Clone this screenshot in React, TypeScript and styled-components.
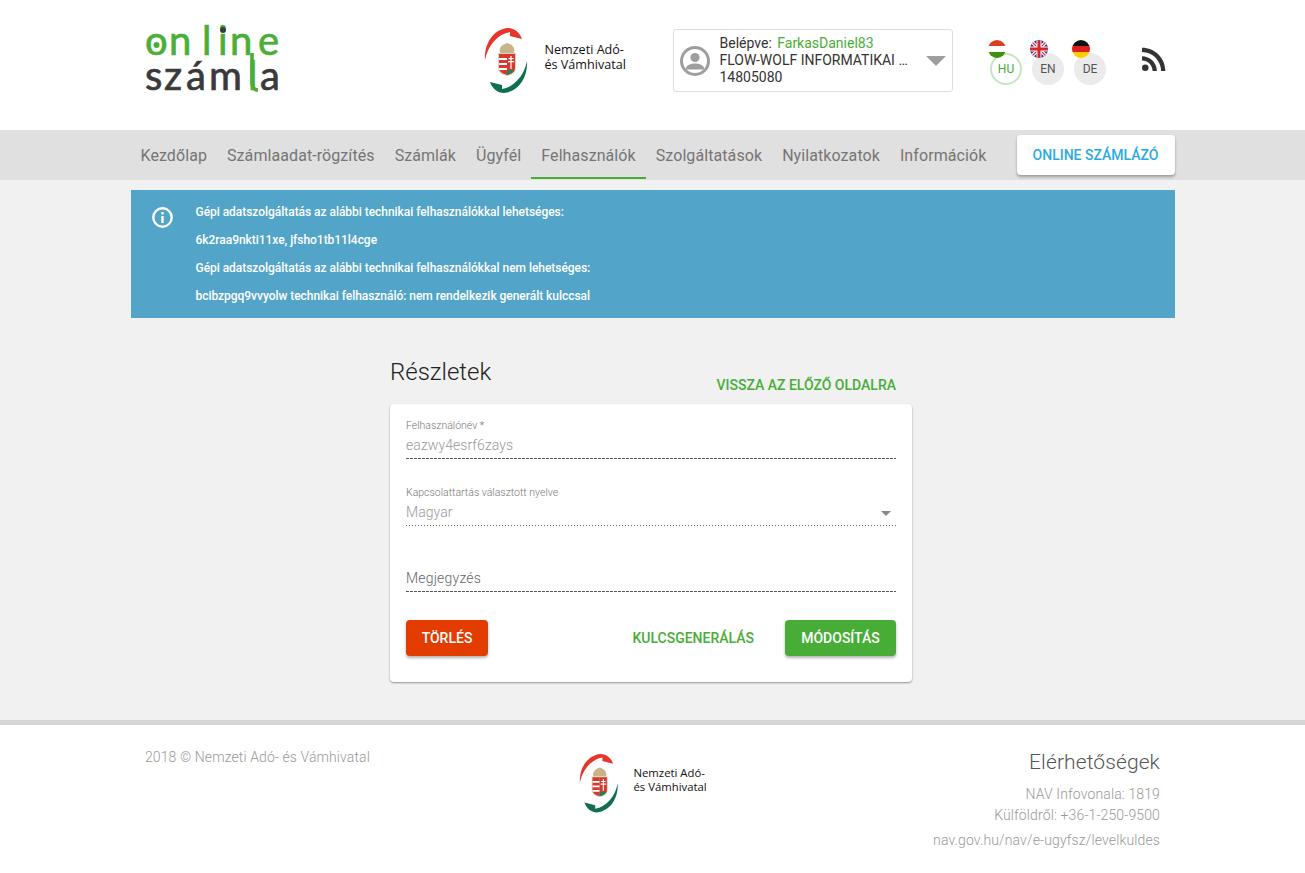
import React from 'react'
import styled, { createGlobalStyle } from 'styled-components'
import { MdRssFeed } from 'react-icons/md'

const GREEN = '#47ad37'

const GlobalStyle = createGlobalStyle`
  html, body {
    margin: 0;
    padding: 0;
    background: #fff;
    font-family: Roboto, "Liberation Sans", sans-serif;
    color: #333;
  }
  * { box-sizing: border-box; }
`

const Page = styled.div`
  min-height: 100vh;
  display: flex;
  flex-direction: column;
`

const Container = styled.div`
  width: 1044px;
  margin: 0 auto;
`

const Header = styled(Container)`
  height: 130px;
  display: flex;
  align-items: center;
  padding: 0 0 9px 12px;
`

const LogoSlot = styled.div`
  width: 341px;
  display: flex;
`

const UserBox = styled.div`
  width: 280px;
  height: 63px;
  margin-left: 46px;
  border: 1px solid #ddd;
  border-radius: 3px;
  display: flex;
  align-items: center;
  padding-left: 6px;
  font-size: 14px;
  line-height: 17px;
  color: #333;
`

const UserIcon = styled.svg`
  flex: none;
  width: 30px;
  height: 30px;
  color: #9e9e9e;
`

const UserText = styled.div`
  width: 191px;
  margin-left: 10px;
`

const UserLine = styled.div`
  white-space: nowrap;
  overflow: hidden;
  text-overflow: ellipsis;
`

const UserName = styled.span`
  margin-left: 2px;
  color: ${GREEN};
`

const Caret = styled.div`
  width: 0;
  height: 0;
  margin-left: 15px;
  border-left: 10px solid transparent;
  border-right: 10px solid transparent;
  border-top: 10px solid #9e9e9e;
`

const Langs = styled.div`
  display: flex;
  gap: 10px;
  margin-left: 37px;
  margin-top: 17px;
`

const Lang = styled.div<{ $active?: boolean }>`
  position: relative;
  width: 32px;
  height: 32px;
  padding-left: 1px;
  border-radius: 50%;
  display: flex;
  align-items: center;
  justify-content: center;
  font-size: 12px;
  background: ${(p) => (p.$active ? '#fff' : '#ebebeb')};
  border: ${(p) => (p.$active ? '2px solid #c5e6c0' : 'none')};
  color: ${(p) => (p.$active ? GREEN : '#555')};
`

const FlagWrap = styled.div<{ $active?: boolean }>`
  position: absolute;
  top: ${(p) => (p.$active ? '-15px' : '-13px')};
  left: ${(p) => (p.$active ? '-4px' : '-2px')};
  width: 18px;
  height: 18px;
  line-height: 0;
`

const Rss = styled(MdRssFeed)`
  flex: none;
  margin-left: 30px;
  margin-top: -4px;
  color: #333;
`

const NavBar = styled.div`
  background: #e0e0e0;
  height: 50px;
`

const NavInner = styled(Container)`
  height: 49px;
  display: flex;
  align-items: stretch;
  position: relative;
`

const NavItem = styled.div<{ $active?: boolean }>`
  padding: 3px 10px 0;
  display: flex;
  align-items: center;
  font-size: 16px;
  letter-spacing: 0.08px;
  color: #757575;
  border-bottom: 2px solid ${(p) => (p.$active ? GREEN : 'transparent')};
`

const SystemButton = styled.div`
  margin: 5px 0 -1px auto;
  width: 158px;
  height: 40px;
  background: #fff;
  border-radius: 4px;
  box-shadow: 0 2px 3px rgba(0, 0, 0, 0.3);
  display: flex;
  align-items: center;
  justify-content: center;
  font-size: 14px;
  font-weight: 500;
  color: #29abe2;
`

const Main = styled.div`
  background: #f1f1f1;
  height: 540px;
  padding-top: 10px;
`

const Alert = styled(Container)`
  height: 128px;
  background: #53a4c9;
  color: #fff;
  display: flex;
  padding: 8px 0 0 21px;
`

const AlertIcon = styled.svg`
  flex: none;
  width: 21px;
  height: 21px;
  margin-top: 8.5px;
`

const AlertBody = styled.div`
  margin-left: 23px;
`

const AlertLine = styled.div`
  font-size: 12px;
  font-weight: 500;
  line-height: 28px;
  letter-spacing: -0.04px;
`

const Content = styled.div`
  width: 522px;
  margin-left: calc(50% - 262.5px);
  padding-top: 38px;
`

const TitleRow = styled.div`
  height: 48px;
  display: flex;
  justify-content: space-between;
  padding-right: 16px;
`

const Title = styled.h2`
  margin: 2px 0 0;
  font-size: 24px;
  font-weight: 300;
  line-height: 28px;
  color: #222;
`

const BackLink = styled.div`
  font-size: 14px;
  font-weight: 500;
  line-height: 16px;
  margin-top: 21px;
  color: ${GREEN};
`

const Card = styled.div`
  height: 278px;
  background: #fff;
  border-radius: 4px;
  box-shadow: 0 1px 2px rgba(0, 0, 0, 0.4);
  padding: 16px 16px 0;
`

const Field = styled.div<{ $height: number }>`
  position: relative;
  height: ${(p) => p.$height}px;
`

const Label = styled.div`
  font-size: 10.5px;
  font-weight: 300;
  line-height: 12px;
  color: #777;
`

const Value = styled.div`
  font-size: 14px;
  font-weight: 300;
  line-height: 18px;
  margin-top: 4px;
  color: #999;
  padding-bottom: 4px;
  height: 23px;
  letter-spacing: 0.07px;
  background: repeating-linear-gradient(to right, #555 0 3px, transparent 3px 4px) left bottom / 100% 1px no-repeat;
`

const SelectValue = styled(Value)`
  background: repeating-linear-gradient(to right, #666 0 1px, transparent 1px 3px) left bottom / 100% 1px no-repeat;
`

const NoteValue = styled(Value)`
  margin-top: 3px;
  color: #666;
  letter-spacing: 0.2px;
`

const SelectCaret = styled.div`
  position: absolute;
  right: 5px;
  top: 24px;
  width: 0;
  height: 0;
  border-left: 5px solid transparent;
  border-right: 5px solid transparent;
  border-top: 5px solid #888;
`

const Actions = styled.div`
  display: flex;
  align-items: center;
  margin-top: 27px;
`

const Button = styled.div<{ $color: string; $width: number }>`
  height: 36px;
  width: ${(p) => p.$width}px;
  display: flex;
  align-items: center;
  justify-content: center;
  border-radius: 4px;
  font-size: 14px;
  font-weight: 500;
  color: #fff;
  background: ${(p) => p.$color};
  box-shadow: 0 2px 3px rgba(0, 0, 0, 0.3);
`

const TextButton = styled.div`
  margin-left: auto;
  margin-right: 31px;
  font-size: 14px;
  font-weight: 500;
  color: ${GREEN};
`

const Footer = styled.div`
  flex: 1;
  border-top: 5px solid #d6d6d6;
  background: #fff;
`

const FooterInner = styled(Container)`
  display: grid;
  grid-template-columns: 434px 1fr auto;
  padding: 24px 14.5px 0;
`

const Copyright = styled.div`
  font-size: 14px;
  font-weight: 300;
  line-height: 16px;
  letter-spacing: 0.1px;
  color: #999;
`

const FooterLogo = styled.div`
  margin-top: 4px;
`

const Contacts = styled.div`
  text-align: right;
  font-size: 14px;
  font-weight: 300;
  letter-spacing: 0.13px;
  color: #999;
`

const ContactTitle = styled.div`
  font-size: 21px;
  font-weight: 300;
  line-height: 24px;
  letter-spacing: 0.1px;
  color: #555;
  margin: 1px 0 10px;
`

const ContactLine = styled.div<{ $gap?: number }>`
  line-height: 21px;
  margin-top: ${(p) => p.$gap ?? 0}px;
`

const OnlineLogo = () => (
  <svg width="142" height="100" viewBox="0 -14 142 100" role="img">
    <text
      x="2 26 59 75 87 115"
      y="30"
      fontFamily="Lato, sans-serif"
      fontSize="40"
      fill="#4bae37"
      stroke="#4bae37"
      strokeWidth="0.7"
    >
      online
    </text>
    <circle cx="13.5" cy="20" r="3" fill="#4bae37" />
    <circle cx="80" cy="5" r="3" fill="#3a3a3a" />
    <path d="M109 28 V57 Q109 65 115 65" fill="none" stroke="#4bae37" strokeWidth="3.6" />
    <text
      x="2 21 43 66 105 117"
      y="65"
      fontFamily="Lato, sans-serif"
      fontSize="40"
      fill="#3a3a3a"
      stroke="#3a3a3a"
      strokeWidth="0.7"
    >
      szám<tspan fill="#4bae37" stroke="#4bae37">l</tspan>a
    </text>
  </svg>
)

const NavLogo = ({ scale = 1 }: { scale?: number }) => (
  <svg width={143 * scale} height={68 * scale} viewBox="0 0 143 68" role="img">
    <path d="M1 33 C0 16 10 2 24 1 C31 1 36 6 38 12 L26 9 L26 5 C14 7 4 18 1 33 Z" fill="#e8352a" />
    <path
      d="M1 33 C0 16 10 2 24 1 C31 1 36 6 38 12 L26 9 L26 5 C14 7 4 18 1 33 Z"
      fill="#0f6f50"
      transform="rotate(180 22 33.5)"
    />
    <path d="M16 26 Q14 19 23 16 Q32 19 30 26 Z" fill="#c9b48a" />
    <path d="M14 26 H32 V41 Q32 47 23 49 Q14 47 14 41 Z" fill="#d9d2c0" />
    <path d="M15 27 H23 V48 Q15 46 15 41 Z" fill="#d8392f" />
    <path d="M15 31 H23 V33 H15 Z M15 36 H23 V38 H15 Z M15 41 H23 V43 H15 Z" fill="#fff" />
    <path d="M23 27 H31 V41 Q31 46 23 48 Z" fill="#d8392f" />
    <path d="M23 43 H31 V41 Q31 46 23 48 Z" fill="#2f7d55" />
    <path d="M26.4 29 H27.6 V31 H29.5 V32.2 H27.6 V34 H30 V35.2 H27.6 V42 H26.4 V35.2 H24 V34 H26.4 V32.2 H24.5 V31 H26.4 Z" fill="#fff" />
    <text fontFamily="'Open Sans', sans-serif" fontSize="12.6" fill="#111">
      <tspan x="60.5" y="27">Nemzeti Adó-</tspan>
      <tspan x="60.5" y="42">és Vámhivatal</tspan>
    </text>
  </svg>
)

const Flag = ({ code }: { code: string }) => (
  <svg width="18" height="18" viewBox="0 0 18 18">
    <clipPath id={`flag-${code}`}>
      <circle cx="9" cy="9" r="9" />
    </clipPath>
    <g clipPath={`url(#flag-${code})`}>
      {code === 'hu' && (
        <>
          <rect width="18" height="6" fill="#d9401f" />
          <rect y="6" width="18" height="6" fill="#fff" />
          <rect y="12" width="18" height="6" fill="#3f8f0e" />
        </>
      )}
      {code === 'en' && (
        <>
          <rect width="18" height="18" fill="#1f2f7a" />
          <path d="M0 0 L18 18 M18 0 L0 18" stroke="#fff" strokeWidth="3.4" />
          <path d="M0 0 L18 18 M18 0 L0 18" stroke="#d8232a" strokeWidth="1.2" />
          <path d="M9 0 V18 M0 9 H18" stroke="#fff" strokeWidth="5" />
          <path d="M9 0 V18 M0 9 H18" stroke="#d8232a" strokeWidth="3" />
        </>
      )}
      {code === 'de' && (
        <>
          <rect width="18" height="6" fill="#111" />
          <rect y="6" width="18" height="6" fill="#dd1f1f" />
          <rect y="12" width="18" height="6" fill="#ffcc00" />
        </>
      )}
    </g>
  </svg>
)

const navItems = [
  'Kezdőlap',
  'Számlaadat-rögzítés',
  'Számlák',
  'Ügyfél',
  'Felhasználók',
  'Szolgáltatások',
  'Nyilatkozatok',
  'Információk',
]

const langs = [
  { code: 'hu', label: 'HU', active: true },
  { code: 'en', label: 'EN', active: false },
  { code: 'de', label: 'DE', active: false },
]

const App = () => {
  return (
    <Page>
      <GlobalStyle />
      <Header>
        <LogoSlot>
          <OnlineLogo />
        </LogoSlot>
        <NavLogo />
        <UserBox>
          <UserIcon viewBox="0 0 30 30">
            <circle cx="15" cy="15" r="13.5" fill="none" stroke="currentColor" strokeWidth="3" />
            <circle cx="15" cy="11.5" r="4.6" fill="currentColor" />
            <path d="M6 22.5 C6 19 11 17.5 15 17.5 C19 17.5 24 19 24 22.5 V23.5 H6 Z" fill="currentColor" />
          </UserIcon>
          <UserText>
            <UserLine>
              Belépve:<UserName> FarkasDaniel83</UserName>
            </UserLine>
            <UserLine>FLOW-WOLF INFORMATIKAI KORLÁTOLT</UserLine>
            <UserLine>14805080</UserLine>
          </UserText>
          <Caret />
        </UserBox>
        <Langs>
          {langs.map((l) => (
            <Lang key={l.code} $active={l.active}>
              <FlagWrap $active={l.active}>
                <Flag code={l.code} />
              </FlagWrap>
              {l.label}
            </Lang>
          ))}
        </Langs>
        <Rss size={36} />
      </Header>

      <NavBar>
        <NavInner>
          {navItems.map((item) => (
            <NavItem key={item} $active={item === 'Felhasználók'}>
              {item}
            </NavItem>
          ))}
          <SystemButton>ONLINE SZÁMLÁZÓ</SystemButton>
        </NavInner>
      </NavBar>

      <Main>
        <Alert>
          <AlertIcon viewBox="0 0 21 21">
            <circle cx="10.5" cy="10.5" r="9.2" fill="none" stroke="currentColor" strokeWidth="2.4" />
            <rect x="9.3" y="5" width="2.4" height="2.4" fill="currentColor" />
            <rect x="9.3" y="9" width="2.4" height="7" fill="currentColor" />
          </AlertIcon>
          <AlertBody>
            <AlertLine>Gépi adatszolgáltatás az alábbi technikai felhasználókkal lehetséges:</AlertLine>
            <AlertLine>6k2raa9nkti11xe, jfsho1tb11l4cge</AlertLine>
            <AlertLine>Gépi adatszolgáltatás az alábbi technikai felhasználókkal nem lehetséges:</AlertLine>
            <AlertLine>bcibzpgq9vvyolw technikai felhasználó: nem rendelkezik generált kulccsal</AlertLine>
          </AlertBody>
        </Alert>

        <Content>
          <TitleRow>
            <Title>Részletek</Title>
            <BackLink>VISSZA AZ ELŐZŐ OLDALRA</BackLink>
          </TitleRow>
          <Card>
            <Field $height={67}>
              <Label>Felhasználónév *</Label>
              <Value>eazwy4esrf6zays</Value>
            </Field>
            <Field $height={67}>
              <Label>Kapcsolattartás választott nyelve</Label>
              <SelectValue>Magyar</SelectValue>
              <SelectCaret />
            </Field>
            <Field $height={39}>
              <Label>&nbsp;</Label>
              <NoteValue>Megjegyzés</NoteValue>
            </Field>
            <Actions>
              <Button $color="#e33c00" $width={82}>TÖRLÉS</Button>
              <TextButton>KULCSGENERÁLÁS</TextButton>
              <Button $color={GREEN} $width={111}>MÓDOSÍTÁS</Button>
            </Actions>
          </Card>
        </Content>
      </Main>

      <Footer>
        <FooterInner>
          <Copyright>2018 © Nemzeti Adó- és Vámhivatal</Copyright>
          <FooterLogo>
            <NavLogo scale={0.9} />
          </FooterLogo>
          <Contacts>
            <ContactTitle>Elérhetőségek</ContactTitle>
            <ContactLine>NAV Infovonala: 1819</ContactLine>
            <ContactLine>Külföldről: +36-1-250-9500</ContactLine>
            <ContactLine $gap={4}>nav.gov.hu/nav/e-ugyfsz/levelkuldes</ContactLine>
          </Contacts>
        </FooterInner>
      </Footer>
    </Page>
  )
}

export default App
